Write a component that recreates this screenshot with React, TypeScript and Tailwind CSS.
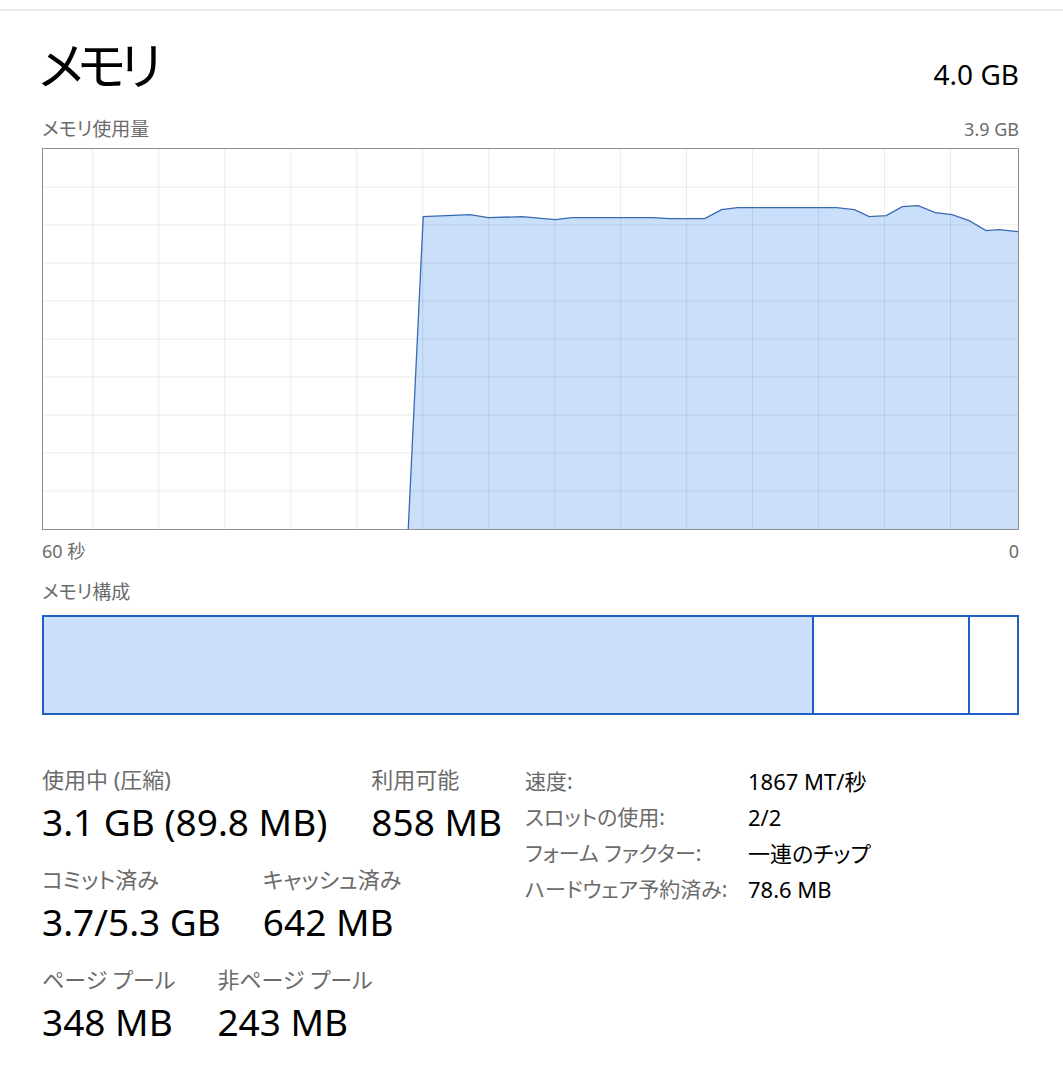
import React from 'react'

// points of the usage line, in graph pixels (977 x 382)
const usage: [number, number][] = [
    [366, 382], [381, 68], [428, 66], [446, 69], [480, 68], [513, 71], [530, 69],
    [611, 69], [628, 70], [663, 70], [680, 61], [696, 59], [795, 59], [813, 61],
    [828, 68], [845, 67], [861, 58], [877, 57], [894, 64], [911, 66], [928, 72],
    [945, 82], [958, 81], [977, 83],
]

const UsageGraph = () => {
    const line = usage.map(([x, y]) => `${x},${y}`).join(' ')
    const area = `${line} 977,382 366,382`
    const cols = Array.from({ length: 14 }, (_, i) => 50 + i * 66.1)
    const rows = Array.from({ length: 9 }, (_, i) => (i + 1) * 38.2)

    return (
        <div className="mt-[7px] h-[382px] border border-[#8f8f8f] bg-white">
            <svg viewBox="0 0 977 382" preserveAspectRatio="none" className="block w-full h-full">
                <polygon points={area} fill="#cadffa" />
                {cols.map((x) => (
                    <line key={'c' + x} x1={x} y1={0} x2={x} y2={382} stroke="rgba(0,0,0,0.08)" strokeWidth={1} vectorEffect="non-scaling-stroke" />
                ))}
                {rows.map((y) => (
                    <line key={'r' + y} x1={0} y1={y} x2={977} y2={y} stroke="rgba(0,0,0,0.08)" strokeWidth={1} vectorEffect="non-scaling-stroke" />
                ))}
                <polyline points={line} fill="none" stroke="#376ab3" strokeWidth={1.3} vectorEffect="non-scaling-stroke" />
            </svg>
        </div>
    )
}

const Stat = ({ label, value }: { label: string; value: string }) => (
    <div className="flex flex-col">
        <span className="text-[22px] leading-[28px] text-[#6b6b6b] whitespace-nowrap">{label}</span>
        <span className="mt-[5px] text-[37px] leading-[48px] text-black whitespace-nowrap">{value}</span>
    </div>
)

const specs = [
    ['速度:', '1867 MT/秒'],
    ['スロットの使用:', '2/2'],
    ['フォーム ファクター:', '一連のチップ'],
    ['ハードウェア予約済み:', '78.6 MB'],
]

const App = () => {
    return (
        <div className="w-[1063px] h-[1080px] overflow-hidden bg-white font-['Noto_Sans','Noto_Sans_CJK_JP',sans-serif] [font-feature-settings:'palt']">
            <div className="mt-[9px] h-[2px] bg-[#ececec]"></div>

            <section className="pl-[42px] pr-[44px]">
                <div className="mt-[28px] flex justify-between items-baseline">
                    <h1 className="-ml-[3px] text-[51px] leading-[52px] tracking-[-6px] text-black">メモリ</h1>
                    <span className="text-[28px] leading-none text-black">4.0 GB</span>
                </div>

                <div className="mt-[26px] flex justify-between items-baseline text-[#6b6b6b] leading-[24px]">
                    <span className="text-[19px]">メモリ使用量</span>
                    <span className="text-[18px]">3.9 GB</span>
                </div>

                <UsageGraph />

                <div className="mt-[9px] flex justify-between text-[18px] leading-[24px] text-[#6b6b6b]">
                    <span>60 秒</span>
                    <span>0</span>
                </div>

                <div className="mt-[17px] text-[19px] leading-[24px] text-[#6b6b6b]">メモリ構成</div>

                <div className="mt-[11px] h-[100px] flex border-2 border-[#1e5fc6]">
                    <div className="w-[770px] bg-[#cce0fb] border-r-2 border-[#1e5fc6]"></div>
                    <div className="w-[156px] bg-white border-r-2 border-[#1e5fc6]"></div>
                    <div className="flex-1 bg-white"></div>
                </div>

                <div className="mt-[50px] flex">
                    <div className="w-[483px] shrink-0 flex flex-col gap-[19px]">
                        <div className="flex gap-[44px]">
                            <Stat label="使用中 (圧縮)" value="3.1 GB (89.8 MB)" />
                            <Stat label="利用可能" value="858 MB" />
                        </div>
                        <div className="flex gap-[42px]">
                            <Stat label="コミット済み" value="3.7/5.3 GB" />
                            <Stat label="キャッシュ済み" value="642 MB" />
                        </div>
                        <div className="flex gap-[42px]">
                            <Stat label="ページ プール" value="348 MB" />
                            <Stat label="非ページ プール" value="243 MB" />
                        </div>
                    </div>

                    <div className="-mt-[2px] grid grid-cols-[223px_auto] text-[22px] leading-[36px] h-fit">
                        {specs.map(([k, v]) => (
                            <React.Fragment key={k}>
                                <span className="text-[#6b6b6b] text-[21px] whitespace-nowrap">{k}</span>
                                <span className="text-black whitespace-nowrap">{v}</span>
                            </React.Fragment>
                        ))}
                    </div>
                </div>
            </section>
        </div>
    )
}

export default App
